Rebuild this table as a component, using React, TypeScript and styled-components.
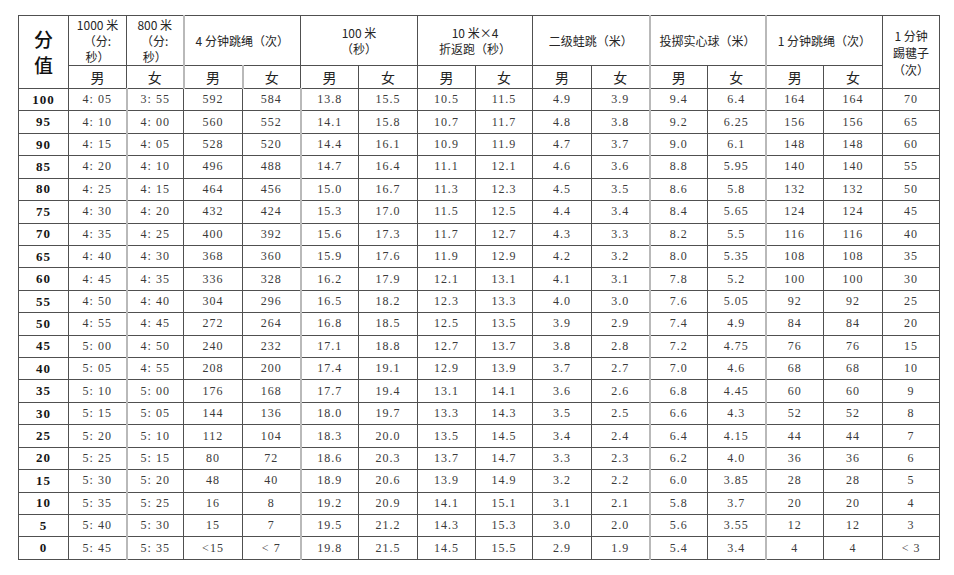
import React from "react";
import styled, { createGlobalStyle } from "styled-components";

const GlobalStyle = createGlobalStyle`
  html, body { margin: 0; padding: 0; background: #ffffff; }
  body { font-family: "Noto Sans CJK SC", sans-serif; }
`;

const Page = styled.div`
  padding: 15px 0 0 18px;
  width: 954px;
  height: 575px;
  box-sizing: border-box;
  overflow: hidden;
`;

const Table = styled.table`
  border-collapse: collapse;
  table-layout: fixed;
  width: 921px;
  border-top: 1px solid #8a8a8a;
`;

const HeadRowTop = styled.tr`
  height: 50px;
`;

const HeadRowSub = styled.tr`
  height: 23px;
`;

const BodyRow = styled.tr`
  height: 22.43px;
`;

const Cell = styled.td<{ $light?: boolean }>`
  border: 1px solid #505050;
  ${(p) => (p.$light ? "border-right: 2px solid #b9b9b9;" : "")}
  padding: 0;
  text-align: center;
  vertical-align: middle;
  overflow: hidden;
`;

const ScoreHead = styled(Cell)`
  font-family: "Noto Sans CJK SC", sans-serif;
  font-size: 19px;
  font-weight: 500;
  color: #111;
`;

const ScoreChar = styled.span`
  display: block;
  height: 26px;
  line-height: 26px;
`;

const ItemHead = styled(Cell)`
  font-family: "Noto Sans CJK SC", sans-serif;
  font-size: 12px;
  line-height: 16px;
  color: #262626;
`;

const HeadLine = styled.span<{ $tall?: boolean }>`
  display: block;
  height: ${(p) => (p.$tall ? 17 : 16)}px;
  line-height: ${(p) => (p.$tall ? 17 : 16)}px;
  white-space: nowrap;
`;

const SexHead = styled(Cell)`
  font-family: "Noto Sans CJK SC", sans-serif;
  font-size: 14px;
  line-height: 18px;
  color: #222;
`;

const ScoreCell = styled(Cell)`
  font-family: "Liberation Serif", serif;
  font-weight: bold;
  font-size: 13px;
  letter-spacing: 1px;
  color: #151515;
`;

const DataCell = styled(Cell)`
  font-family: "Liberation Serif", serif;
  font-size: 12px;
  letter-spacing: 1px;
  color: #3a3a3a;
  white-space: pre;
`;

const widths = [50, 58, 57, 59, 58, 58, 59, 58, 57, 59, 58, 58, 58, 58, 59, 57];

// columns whose right border is the lighter, doubled grey line
const lightCols = new Set([1, 4, 10, 12]);

type Row = (string | number)[];

const rows: Row[] = [
  [100, "4:05", "3:55", 592, 584, "13.8", "15.5", "10.5", "11.5", "4.9", "3.9", "9.4", "6.4", 164, 164, 70],
  [95, "4:10", "4:00", 560, 552, "14.1", "15.8", "10.7", "11.7", "4.8", "3.8", "9.2", "6.25", 156, 156, 65],
  [90, "4:15", "4:05", 528, 520, "14.4", "16.1", "10.9", "11.9", "4.7", "3.7", "9.0", "6.1", 148, 148, 60],
  [85, "4:20", "4:10", 496, 488, "14.7", "16.4", "11.1", "12.1", "4.6", "3.6", "8.8", "5.95", 140, 140, 55],
  [80, "4:25", "4:15", 464, 456, "15.0", "16.7", "11.3", "12.3", "4.5", "3.5", "8.6", "5.8", 132, 132, 50],
  [75, "4:30", "4:20", 432, 424, "15.3", "17.0", "11.5", "12.5", "4.4", "3.4", "8.4", "5.65", 124, 124, 45],
  [70, "4:35", "4:25", 400, 392, "15.6", "17.3", "11.7", "12.7", "4.3", "3.3", "8.2", "5.5", 116, 116, 40],
  [65, "4:40", "4:30", 368, 360, "15.9", "17.6", "11.9", "12.9", "4.2", "3.2", "8.0", "5.35", 108, 108, 35],
  [60, "4:45", "4:35", 336, 328, "16.2", "17.9", "12.1", "13.1", "4.1", "3.1", "7.8", "5.2", 100, 100, 30],
  [55, "4:50", "4:40", 304, 296, "16.5", "18.2", "12.3", "13.3", "4.0", "3.0", "7.6", "5.05", 92, 92, 25],
  [50, "4:55", "4:45", 272, 264, "16.8", "18.5", "12.5", "13.5", "3.9", "2.9", "7.4", "4.9", 84, 84, 20],
  [45, "5:00", "4:50", 240, 232, "17.1", "18.8", "12.7", "13.7", "3.8", "2.8", "7.2", "4.75", 76, 76, 15],
  [40, "5:05", "4:55", 208, 200, "17.4", "19.1", "12.9", "13.9", "3.7", "2.7", "7.0", "4.6", 68, 68, 10],
  [35, "5:10", "5:00", 176, 168, "17.7", "19.4", "13.1", "14.1", "3.6", "2.6", "6.8", "4.45", 60, 60, 9],
  [30, "5:15", "5:05", 144, 136, "18.0", "19.7", "13.3", "14.3", "3.5", "2.5", "6.6", "4.3", 52, 52, 8],
  [25, "5:20", "5:10", 112, 104, "18.3", "20.0", "13.5", "14.5", "3.4", "2.4", "6.4", "4.15", 44, 44, 7],
  [20, "5:25", "5:15", 80, 72, "18.6", "20.3", "13.7", "14.7", "3.3", "2.3", "6.2", "4.0", 36, 36, 6],
  [15, "5:30", "5:20", 48, 40, "18.9", "20.6", "13.9", "14.9", "3.2", "2.2", "6.0", "3.85", 28, 28, 5],
  [10, "5:35", "5:25", 16, 8, "19.2", "20.9", "14.1", "15.1", "3.1", "2.1", "5.8", "3.7", 20, 20, 4],
  [5, "5:40", "5:30", 15, 7, "19.5", "21.2", "14.3", "15.3", "3.0", "2.0", "5.6", "3.55", 12, 12, 3],
  [0, "5:45", "5:35", "<15", "< 7", "19.8", "21.5", "14.5", "15.5", "2.9", "1.9", "5.4", "3.4", 4, 4, "< 3"],
];

const pairItems: { lines: string[]; light?: boolean }[] = [
  { lines: ["4 分钟跳绳（次）"] },
  { lines: ["100 米", "（秒）"] },
  { lines: ["10 米×4", "折返跑（秒）"] },
  { lines: ["二级蛙跳（米）"], light: true },
  { lines: ["投掷实心球（米）"], light: true },
  { lines: ["1 分钟跳绳（次）"] },
];

const fmt = (v: string | number) => String(v).replace(":", ": ");

const Lines = ({ lines, tall }: { lines: string[]; tall?: boolean }) => (
  <>
    {lines.map((l, i) => (
      <HeadLine key={i} $tall={tall}>
        {l}
      </HeadLine>
    ))}
  </>
);

export default function App() {
  return (
    <Page>
      <GlobalStyle />
      <Table>
        <colgroup>
          {widths.map((w, i) => (
            <col key={i} style={{ width: w }} />
          ))}
        </colgroup>
        <thead>
          <HeadRowTop>
            <ScoreHead rowSpan={2}>
              <ScoreChar>分</ScoreChar>
              <ScoreChar>值</ScoreChar>
            </ScoreHead>
            <ItemHead>
              <Lines lines={["1000 米", "（分:", "秒）"]} />
            </ItemHead>
            <ItemHead $light>
              <Lines lines={["800 米", "（分:", "秒）"]} />
            </ItemHead>
            {pairItems.map((it, i) => (
              <ItemHead key={i} colSpan={2} $light={it.light}>
                <Lines lines={it.lines} />
              </ItemHead>
            ))}
            <ItemHead rowSpan={2}>
              <Lines lines={["1 分钟", "踢毽子", "（次）"]} tall />
            </ItemHead>
          </HeadRowTop>
          <HeadRowSub>
            <SexHead>男</SexHead>
            <SexHead $light>女</SexHead>
            {pairItems.map((it, i) => (
              <React.Fragment key={i}>
                <SexHead $light={i === 0}>男</SexHead>
                <SexHead $light={it.light}>女</SexHead>
              </React.Fragment>
            ))}
          </HeadRowSub>
        </thead>
        <tbody>
          {rows.map((r, ri) => (
            <BodyRow key={ri}>
              <ScoreCell>{r[0]}</ScoreCell>
              {r.slice(1).map((v, ci) => (
                <DataCell key={ci} $light={lightCols.has(ci + 1)}>
                  {fmt(v)}
                </DataCell>
              ))}
            </BodyRow>
          ))}
        </tbody>
      </Table>
    </Page>
  );
}
